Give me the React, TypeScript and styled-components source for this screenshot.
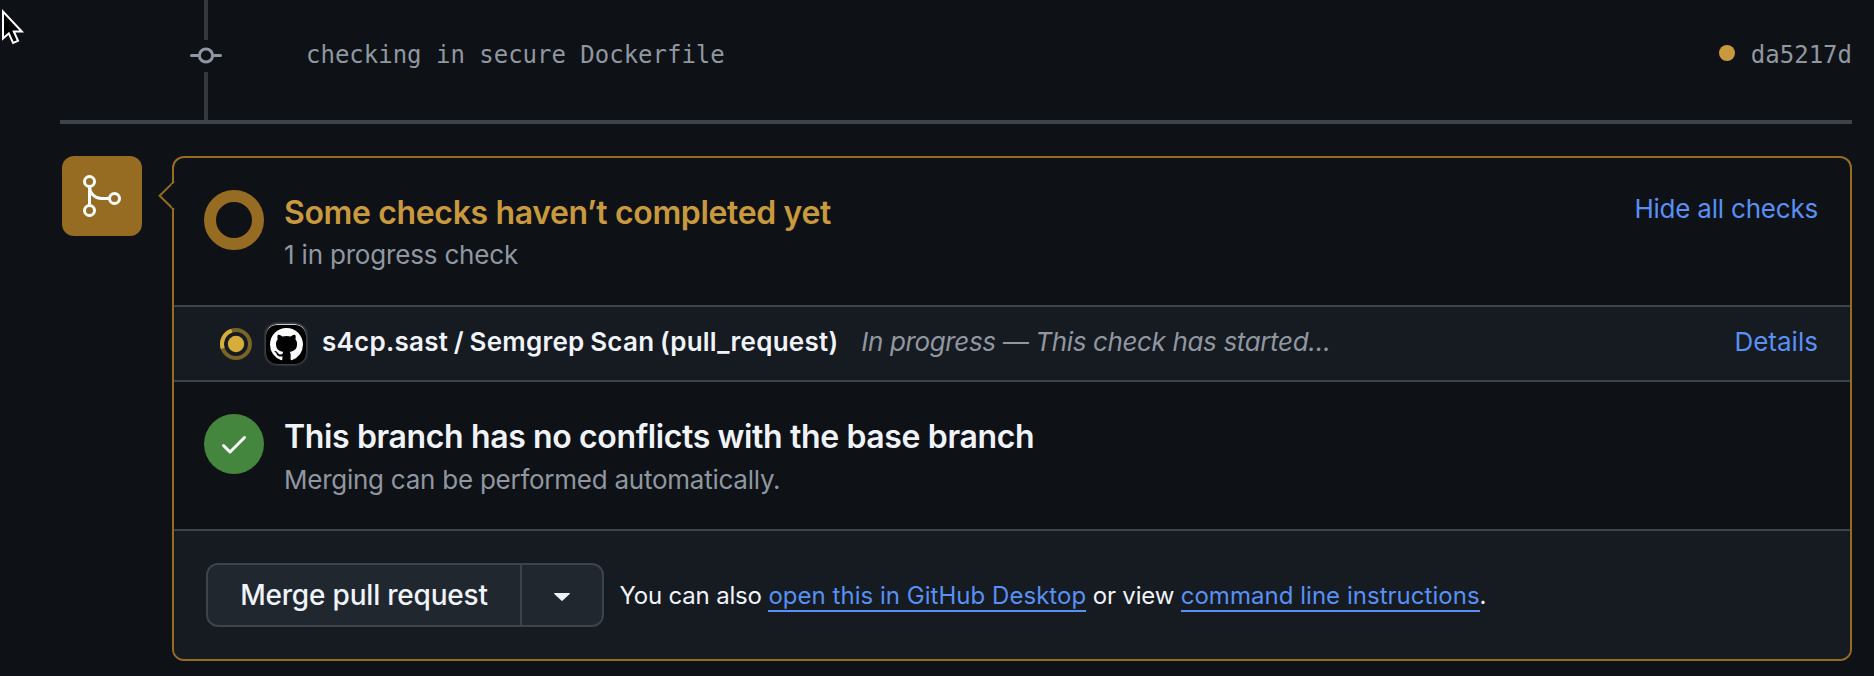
import React from "react";
import styled, { createGlobalStyle } from "styled-components";

const color = {
  canvas: "#0e1116",
  subtle: "#161a21",
  border: "#3d434b",
  timeline: "#34373c",
  attention: "#966c22",
  attentionText: "#c9993e",
  success: "#45863f",
  link: "#5890f3",
  text: "#f0f4fa",
  muted: "#9097a0",
};

const GlobalStyle = createGlobalStyle`
  * { box-sizing: border-box; }
  body {
    margin: 0;
    background: ${color.canvas};
    color: ${color.text};
    font-family: Inter, "Liberation Sans", sans-serif;
    font-size: 26px;
    overflow: hidden;
  }
  svg { display: block; }
`;

const Page = styled.main`
  position: relative;
  height: 676px;
  padding: 0 22px 0 60px;
`;

const Cursor = styled.svg`
  position: absolute;
  left: 0;
  top: 8px;
`;

const CommitRow = styled.div`
  display: flex;
  height: 120px;
  padding-left: 130px;
`;

const Timeline = styled.div`
  display: flex;
  flex-direction: column;
  align-items: center;
  width: 32px;
  margin-right: 84px;
  color: ${color.muted};
`;

const TimelineLine = styled.div<{ $length: number }>`
  width: 4px;
  height: ${(p) => p.$length}px;
  background: ${color.timeline};
`;

const CommitText = styled.div`
  flex: 1;
  padding-top: 37px;
  font: 24px/36px "DejaVu Sans Mono", monospace;
  letter-spacing: -0.01px;
  color: ${color.muted};
`;

const CommitHash = styled(CommitText)`
  flex: none;
  letter-spacing: 0;
`;

const StatusDot = styled.div`
  width: 16px;
  height: 16px;
  margin: 45px 16px 0 0;
  border-radius: 50%;
  background: ${color.attentionText};
`;

const Separator = styled.div`
  height: 4px;
  background: ${color.border};
`;

const MergeArea = styled.section`
  display: flex;
  align-items: flex-start;
  gap: 30px;
  padding: 32px 0 0 2px;
`;

const MergeBadge = styled.div`
  display: grid;
  place-items: center;
  width: 80px;
  height: 80px;
  border-radius: 12px;
  background: ${color.attention};
`;

const Panel = styled.div`
  position: relative;
  flex: 1;
  border: 2px solid ${color.attention};
  border-radius: 12px;
`;

const Caret = styled.svg`
  position: absolute;
  left: -17px;
  top: 22px;
`;

const StatusRow = styled.div`
  display: flex;
  height: 149px;
  padding: 30px 32px 0 30px;
  border-bottom: 2px solid ${color.border};
`;

const StatusIcon = styled.div<{ $kind: "pending" | "success" }>`
  display: grid;
  place-items: center;
  width: 60px;
  height: 60px;
  margin: 2px 20px 0 0;
  border-radius: 50%;
  ${(p) =>
    p.$kind === "pending"
      ? `border: 12px solid ${color.attention};`
      : `background: ${color.success};`}
`;

const StatusBody = styled.div`
  flex: 1;
`;

const Heading = styled.h3<{ $attention?: boolean; $tracking: number }>`
  margin: 0;
  font-size: 32px;
  font-weight: 600;
  line-height: 49px;
  letter-spacing: ${(p) => p.$tracking}px;
  color: ${(p) => (p.$attention ? color.attentionText : color.text)};
`;

const Description = styled.p<{ $tracking: number; $gap?: number }>`
  margin: ${(p) => p.$gap ?? 0}px 0 0;
  line-height: 35px;
  letter-spacing: ${(p) => p.$tracking}px;
  color: ${color.muted};
`;

const ActionLink = styled.a<{ $tracking: number }>`
  line-height: 41px;
  letter-spacing: ${(p) => p.$tracking}px;
  color: ${color.link};
`;

const CheckRow = styled.div`
  display: flex;
  align-items: center;
  height: 75px;
  padding: 0 32px 0 46px;
  border-bottom: 2px solid ${color.border};
  background: ${color.subtle};
`;

const AppAvatar = styled.div`
  display: grid;
  place-items: center;
  width: 42px;
  height: 42px;
  margin: 1px 15px 0 13px;
  border: 1px solid #3c3f45;
  border-radius: 12px;
  background: #000;
  box-shadow: inset 0 1px 0 #c8cbd0, 0 0 0 1px #2b2f36;
`;

const CheckText = styled.div`
  display: flex;
  flex: 1;
  align-items: baseline;
  padding-bottom: 4px;
`;

const CheckName = styled.strong`
  font-weight: 600;
  letter-spacing: 0.25px;
  word-spacing: -1.2px;
`;

const CheckState = styled.em`
  flex: 1;
  margin-left: 23px;
  letter-spacing: -0.36px;
  color: ${color.muted};
`;

const MergeFooter = styled.div`
  display: flex;
  align-items: center;
  height: 128px;
  padding: 0 32px;
  border-radius: 0 0 10px 10px;
  background: ${color.subtle};
`;

const ButtonGroup = styled.div`
  display: flex;
  height: 64px;
  border: 2px solid ${color.border};
  border-radius: 12px;
  background: #21272e;
`;

const MergeButton = styled.button`
  width: 314px;
  padding: 0;
  border: 0;
  border-right: 2px solid ${color.border};
  background: none;
  color: ${color.text};
  font: 500 28px/60px Inter, sans-serif;
  letter-spacing: -0.2px;
`;

const MenuButton = styled.button`
  display: grid;
  place-items: center;
  width: 80px;
  padding: 4px 0 0;
  border: 0;
  background: none;
`;

const FooterText = styled.p`
  margin: 1px 0 0 15.5px;
  font-size: 24px;
  line-height: 36px;
  letter-spacing: -0.18px;
`;

const InlineLink = styled.a`
  border-bottom: 2px solid ${color.link};
  letter-spacing: 0.03px;
  color: ${color.link};
`;

const CommitIcon = () => (
  <svg width="32" height="32" viewBox="0 0 32 32" fill="none" stroke="currentColor" strokeWidth="3" strokeLinecap="round">
    <circle cx="16" cy="15.5" r="6.6" />
    <path d="M1.5 15.5h6.5M24 15.5h6.5" />
  </svg>
);

const MergeIcon = () => (
  <svg width="48" height="48" viewBox="0 0 24 24" fill="none" stroke="#fff" strokeWidth="1.5">
    <circle cx="5.75" cy="4.75" r="2.5" />
    <circle cx="5.75" cy="19.25" r="2.5" />
    <circle cx="18.25" cy="13.25" r="2.5" />
    <path d="M5.75 7.25v9.5M5.75 7.25c0 3.3 2.7 6 6 6h4" />
  </svg>
);

const CheckIcon = () => (
  <svg width="32" height="32" viewBox="0 0 16 16" fill="#fff">
    <path d="M13.78 4.22a.75.75 0 0 1 0 1.06l-7.25 7.25a.75.75 0 0 1-1.06 0L2.22 9.28a.751.751 0 0 1 .018-1.042.751.751 0 0 1 1.042-.018L6 10.94l6.72-6.72a.75.75 0 0 1 1.06 0Z" />
  </svg>
);

const ProgressIcon = () => (
  <svg width="32" height="32" viewBox="0 0 32 32" fill="none">
    <circle cx="16" cy="16" r="14" stroke="#786328" strokeWidth="4" />
    <path d="M2.7 20.3A14 14 0 0 1 11.7 2.7" stroke="#d6ad3b" strokeWidth="4" />
    <circle cx="16" cy="16" r="8.2" fill="#d6ad3b" />
  </svg>
);

const GitHubMark = () => (
  <svg width="33" height="33" viewBox="0 0 16 16" fill="#fff">
    <path d="M8 0c4.42 0 8 3.58 8 8a8.013 8.013 0 0 1-5.45 7.59c-.4.08-.55-.17-.55-.38 0-.27.01-1.13.01-2.2 0-.75-.25-1.23-.54-1.48 1.78-.2 3.65-.88 3.65-3.95 0-.88-.31-1.59-.82-2.15.08-.2.36-1.02-.08-2.12 0 0-.67-.22-2.2.82-.64-.18-1.32-.27-2-.27-.68 0-1.36.09-2 .27-1.53-1.03-2.2-.82-2.2-.82-.44 1.1-.16 1.92-.08 2.12-.51.56-.82 1.28-.82 2.15 0 3.06 1.86 3.75 3.64 3.95-.23.2-.44.55-.51 1.07-.46.21-1.61.55-2.33-.66-.15-.24-.6-.83-1.23-.82-.67.01-.27.38.01.53.34.19.73.9.82 1.13.16.45.68 1.31 2.69.94 0 .67.01 1.3.01 1.49 0 .21-.15.45-.55.38A7.995 7.995 0 0 1 0 8c0-4.42 3.58-8 8-8Z" />
  </svg>
);

export default function App() {
  return (
    <Page>
      <GlobalStyle />
      <CommitRow>
        <Timeline>
          <TimelineLine $length={40} />
          <CommitIcon />
          <TimelineLine $length={48} />
        </Timeline>
        <CommitText>checking in secure Dockerfile</CommitText>
        <StatusDot />
        <CommitHash>da5217d</CommitHash>
      </CommitRow>
      <Separator />
      <MergeArea>
        <MergeBadge>
          <MergeIcon />
        </MergeBadge>
        <Panel>
          <Caret width="18" height="32" viewBox="0 0 18 32">
            <path d="M17 1.6 2.6 15.7 17 29.8" fill={color.canvas} stroke={color.attention} strokeWidth="2" />
            <path d="M16 4v23.5" stroke={color.canvas} strokeWidth="2.4" />
          </Caret>
          <StatusRow>
            <StatusIcon $kind="pending" />
            <StatusBody>
              <Heading $attention $tracking={-0.36}>Some checks haven’t completed yet</Heading>
              <Description $tracking={-0.18}>1 in progress check</Description>
            </StatusBody>
            <ActionLink $tracking={-0.21}>Hide all checks</ActionLink>
          </StatusRow>
          <CheckRow>
            <ProgressIcon />
            <AppAvatar>
              <GitHubMark />
            </AppAvatar>
            <CheckText>
              <CheckName>s4cp.sast / Semgrep Scan (pull_request)</CheckName>
              <CheckState>In progress — This check has started…</CheckState>
              <ActionLink $tracking={0.02}>Details</ActionLink>
            </CheckText>
          </CheckRow>
          <StatusRow>
            <StatusIcon $kind="success">
              <CheckIcon />
            </StatusIcon>
            <StatusBody>
              <Heading $tracking={-0.37}>This branch has no conflicts with the base branch</Heading>
              <Description $tracking={-0.25} $gap={1}>Merging can be performed automatically.</Description>
            </StatusBody>
          </StatusRow>
          <MergeFooter>
            <ButtonGroup>
              <MergeButton>Merge pull request</MergeButton>
              <MenuButton aria-label="Merge options">
                <svg width="16" height="8" viewBox="0 0 16 8" fill={color.text}>
                  <path d="M.6 0h14.8a.5.5 0 0 1 .3.9L8.4 7.8a.6.6 0 0 1-.8 0L.3.9A.5.5 0 0 1 .6 0Z" />
                </svg>
              </MenuButton>
            </ButtonGroup>
            <FooterText>
              You can also <InlineLink>open this in GitHub Desktop</InlineLink> or view{" "}
              <InlineLink>command line instructions</InlineLink>.
            </FooterText>
          </MergeFooter>
        </Panel>
      </MergeArea>
      <Cursor width="26" height="38" viewBox="0 0 26 38">
        <path d="M3 3.5v27l5.8-5.2 4.3 9.7 4.9-2.2-4.2-9.3h8Z" fill="#000" stroke="#fff" strokeWidth="2" />
      </Cursor>
    </Page>
  );
}
